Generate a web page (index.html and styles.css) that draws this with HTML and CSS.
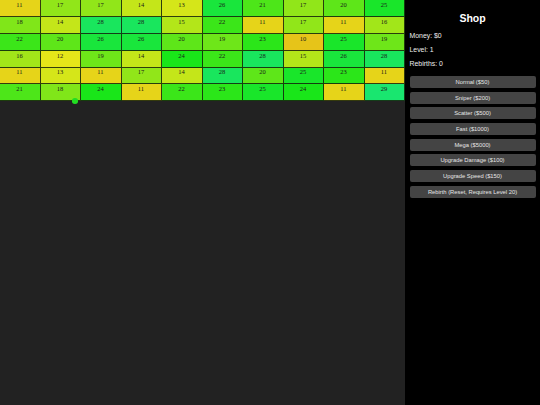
FILE: index.html
```html
<!DOCTYPE html>
<html>
<head>
<meta charset="utf-8">
<link rel="stylesheet" href="styles.css">
</head>
<body>
<div class="game">
  <div class="grid">
    <div class="cell" style="--h:11">11</div><div class="cell" style="--h:17">17</div><div class="cell" style="--h:17">17</div><div class="cell" style="--h:14">14</div><div class="cell" style="--h:13">13</div><div class="cell" style="--h:26">26</div><div class="cell" style="--h:21">21</div><div class="cell" style="--h:17">17</div><div class="cell" style="--h:20">20</div><div class="cell" style="--h:25">25</div>
    <div class="cell" style="--h:18">18</div><div class="cell" style="--h:14">14</div><div class="cell" style="--h:28">28</div><div class="cell" style="--h:28">28</div><div class="cell" style="--h:15">15</div><div class="cell" style="--h:22">22</div><div class="cell" style="--h:11">11</div><div class="cell" style="--h:17">17</div><div class="cell" style="--h:11">11</div><div class="cell" style="--h:16">16</div>
    <div class="cell" style="--h:22">22</div><div class="cell" style="--h:20">20</div><div class="cell" style="--h:26">26</div><div class="cell" style="--h:26">26</div><div class="cell" style="--h:20">20</div><div class="cell" style="--h:19">19</div><div class="cell" style="--h:23">23</div><div class="cell" style="--h:10">10</div><div class="cell" style="--h:25">25</div><div class="cell" style="--h:19">19</div>
    <div class="cell" style="--h:16">16</div><div class="cell" style="--h:12">12</div><div class="cell" style="--h:19">19</div><div class="cell" style="--h:14">14</div><div class="cell" style="--h:24">24</div><div class="cell" style="--h:22">22</div><div class="cell" style="--h:28">28</div><div class="cell" style="--h:15">15</div><div class="cell" style="--h:26">26</div><div class="cell" style="--h:28">28</div>
    <div class="cell" style="--h:11">11</div><div class="cell" style="--h:13">13</div><div class="cell" style="--h:11">11</div><div class="cell" style="--h:17">17</div><div class="cell" style="--h:14">14</div><div class="cell" style="--h:28">28</div><div class="cell" style="--h:20">20</div><div class="cell" style="--h:25">25</div><div class="cell" style="--h:23">23</div><div class="cell" style="--h:11">11</div>
    <div class="cell" style="--h:21">21</div><div class="cell" style="--h:18">18</div><div class="cell" style="--h:24">24</div><div class="cell" style="--h:11">11</div><div class="cell" style="--h:22">22</div><div class="cell" style="--h:23">23</div><div class="cell" style="--h:25">25</div><div class="cell" style="--h:24">24</div><div class="cell" style="--h:11">11</div><div class="cell" style="--h:29">29</div>
  </div>
  <div class="ball"></div>
</div>
<div class="shop">
  <h2 class="title">Shop</h2>
  <div class="stat">Money: $0</div>
  <div class="stat">Level: 1</div>
  <div class="stat">Rebirths: 0</div>
  <div class="buttons">
    <button class="btn">Normal ($50)</button>
    <button class="btn">Sniper ($200)</button>
    <button class="btn">Scatter ($500)</button>
    <button class="btn">Fast ($1000)</button>
    <button class="btn">Mega ($5000)</button>
    <button class="btn">Upgrade Damage ($100)</button>
    <button class="btn">Upgrade Speed ($150)</button>
    <button class="btn">Rebirth (Reset, Requires Level 20)</button>
  </div>
</div>
</body>
</html>
```
FILE: styles.css
```css
html, body {
  margin: 0;
  padding: 0;
  width: 540px;
  height: 405px;
  overflow: hidden;
  background: #000;
}
body {
  display: flex;
  font-family: "Liberation Sans", Arial, sans-serif;
}
.game {
  position: relative;
  width: 405px;
  height: 405px;
  background: #222;
}
.grid {
  display: grid;
  grid-template-columns: repeat(10, 1fr);
  grid-template-rows: repeat(6, 16.875px);
  width: 405px;
}
.cell {
  box-sizing: border-box;
  background: hsl(calc(var(--h) * 5deg), 80%, 50%);
  box-shadow: inset -1px -1px 0 rgba(20, 30, 10, 0.85);
  font-family: "Liberation Serif", "Times New Roman", serif;
  font-size: 6.5px;
  line-height: 6.5px;
  padding: 1.9px 0 0 16.3px;
  color: #1a1a1a;
}
.ball {
  position: absolute;
  left: 72.2px;
  top: 98.2px;
  width: 5.6px;
  height: 5.6px;
  border-radius: 50%;
  background: #22dd22;
}
.shop {
  width: 135px;
  height: 405px;
  box-sizing: border-box;
  padding: 10px 4.5px 0 4.5px;
  background: #000;
  color: #fff;
}
.title {
  margin: 0 0 3px 0;
  height: 16px;
  line-height: 16px;
  font-size: 10.5px;
  font-weight: bold;
  text-align: center;
}
.stat {
  height: 14px;
  line-height: 14px;
  font-size: 6.9px;
  color: #eee;
}
.buttons {
  display: flex;
  flex-direction: column;
  gap: 3.7px;
  margin-top: 5px;
}
.btn {
  display: block;
  width: 100%;
  height: 12px;
  margin: 0;
  padding: 0;
  border: none;
  border-radius: 2px;
  background: #444;
  color: #e6e6e6;
  font-family: "Liberation Sans", Arial, sans-serif;
  font-size: 5.8px;
  line-height: 12px;
  text-align: center;
}
```
